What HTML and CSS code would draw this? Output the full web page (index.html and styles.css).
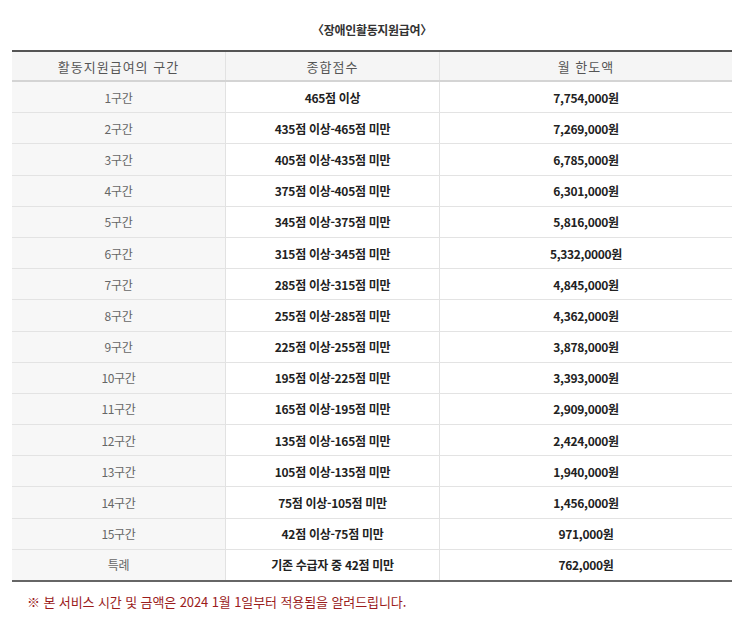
FILE: index.html
```html
<!DOCTYPE html>
<html lang="ko">
<head>
<meta charset="utf-8">
<link rel="stylesheet" href="styles.css">
</head>
<body>
<div class="page">
  <p class="title">〈장애인활동지원급여〉</p>
  <table class="grid">
    <thead>
      <tr><th class="c1">활동지원급여의 구간</th><th class="c2">종합점수</th><th class="c3">월 한도액</th></tr>
    </thead>
    <tbody>
      <tr><td class="c1">1구간</td><td class="c2">465점 이상</td><td class="c3">7,754,000원</td></tr>
      <tr><td class="c1">2구간</td><td class="c2">435점 이상-465점 미만</td><td class="c3">7,269,000원</td></tr>
      <tr><td class="c1">3구간</td><td class="c2">405점 이상-435점 미만</td><td class="c3">6,785,000원</td></tr>
      <tr><td class="c1">4구간</td><td class="c2">375점 이상-405점 미만</td><td class="c3">6,301,000원</td></tr>
      <tr><td class="c1">5구간</td><td class="c2">345점 이상-375점 미만</td><td class="c3">5,816,000원</td></tr>
      <tr><td class="c1">6구간</td><td class="c2">315점 이상-345점 미만</td><td class="c3">5,332,0000원</td></tr>
      <tr><td class="c1">7구간</td><td class="c2">285점 이상-315점 미만</td><td class="c3">4,845,000원</td></tr>
      <tr><td class="c1">8구간</td><td class="c2">255점 이상-285점 미만</td><td class="c3">4,362,000원</td></tr>
      <tr><td class="c1">9구간</td><td class="c2">225점 이상-255점 미만</td><td class="c3">3,878,000원</td></tr>
      <tr><td class="c1">10구간</td><td class="c2">195점 이상-225점 미만</td><td class="c3">3,393,000원</td></tr>
      <tr><td class="c1">11구간</td><td class="c2">165점 이상-195점 미만</td><td class="c3">2,909,000원</td></tr>
      <tr><td class="c1">12구간</td><td class="c2">135점 이상-165점 미만</td><td class="c3">2,424,000원</td></tr>
      <tr><td class="c1">13구간</td><td class="c2">105점 이상-135점 미만</td><td class="c3">1,940,000원</td></tr>
      <tr><td class="c1">14구간</td><td class="c2">75점 이상-105점 미만</td><td class="c3">1,456,000원</td></tr>
      <tr><td class="c1">15구간</td><td class="c2">42점 이상-75점 미만</td><td class="c3">971,000원</td></tr>
      <tr><td class="c1">특례</td><td class="c2">기존 수급자 중 42점 미만</td><td class="c3">762,000원</td></tr>
    </tbody>
  </table>
  <p class="note">※ 본 서비스 시간 및 금액은 2024 1월 1일부터 적용됨을 알려드립니다.</p>
</div>
</body>
</html>
```
FILE: styles.css
```css
html, body {
  margin: 0;
  padding: 0;
  background: #fff;
}
body {
  font-family: "Noto Sans CJK KR", "Noto Sans", sans-serif;
  color: #222;
}
.page {
  padding: 21px 11px 0 12px;
}
.title {
  margin: 0 0 11px;
  text-align: center;
  font-size: 12px;
  font-weight: bold;
  line-height: 18px;
  color: #333;
  letter-spacing: -0.3px;
}
.grid {
  width: 720px;
  border-collapse: collapse;
  table-layout: fixed;
  border-top: 2px solid #555;
  border-bottom: 2px solid #666;
}
.grid th {
  height: 28px;
  padding: 0;
  background: #f5f5f5;
  font-weight: normal;
  font-size: 13px;
  letter-spacing: 1px;
  color: #555;
  border-bottom: 2px solid #d4d4d4;
  border-left: 1px solid #e2e2e2;
}
.grid td {
  height: 30.2px;
  padding: 0;
  text-align: center;
  font-size: 12px;
  letter-spacing: -0.3px;
  border-bottom: 1px solid #e3e3e3;
  border-left: 1px solid #e2e2e2;
}
.grid tr > :first-child {
  border-left: none;
}
.grid tbody tr:last-child td {
  border-bottom: none;
}
.grid .c1 { width: 213px; }
.grid .c2 { width: 213px; }
.grid td.c1 {
  background: #f7f7f7;
  color: #666;
}
.grid td.c2, .grid td.c3 {
  font-weight: bold;
  color: #222;
}
.note {
  margin: 11px 0 0 15px;
  font-size: 13px;
  line-height: 18px;
  color: #9b1c1c;
  letter-spacing: -0.1px;
}
```
